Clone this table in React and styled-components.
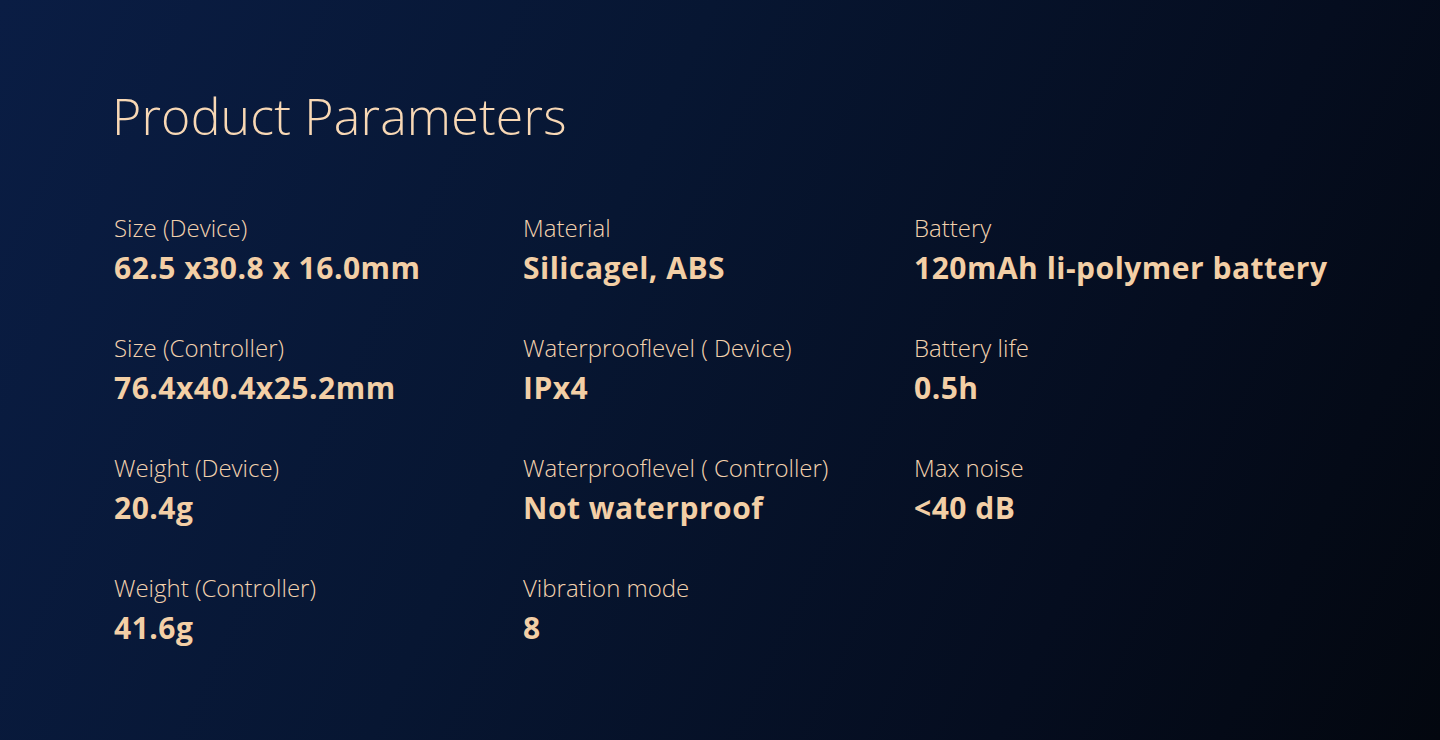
import React from "react";
import styled, { createGlobalStyle } from "styled-components";

const GlobalStyle = createGlobalStyle`
  html, body {
    margin: 0;
    padding: 0;
  }
  body {
    font-family: "Open Sans", "Noto Sans", "Liberation Sans", sans-serif;
  }
  * {
    box-sizing: border-box;
  }
`;

const params = [
  { label: "Size (Device)", value: "62.5 x30.8 x 16.0mm" },
  { label: "Material", value: "Silicagel, ABS" },
  { label: "Battery", value: "120mAh li-polymer battery" },
  { label: "Size (Controller)", value: "76.4x40.4x25.2mm" },
  { label: "Waterprooflevel ( Device)", value: "IPx4" },
  { label: "Battery life", value: "0.5h" },
  { label: "Weight (Device)", value: "20.4g" },
  { label: "Waterprooflevel ( Controller)", value: "Not waterproof" },
  { label: "Max noise", value: "<40 dB" },
  { label: "Weight (Controller)", value: "41.6g" },
  { label: "Vibration mode", value: "8" },
];

export default function App() {
  return (
    <>
      <GlobalStyle />
      <Section>
        <Title>Product Parameters</Title>
        <Grid>
          {params.map(({ label, value }) => (
            <Item key={label}>
              <Label>{label}</Label>
              <Value>{value}</Value>
            </Item>
          ))}
        </Grid>
      </Section>
    </>
  );
}

const Section = styled.section`
  width: 1440px;
  height: 740px;
  padding: 84px 0 0 112px;
  background: linear-gradient(115deg, #0a1d44 0%, #071632 40%, #050d1f 75%, #03070f 100%);
  color: #f6d6b2;
  overflow: hidden;
`;

const Title = styled.h1`
  margin: 0;
  font-weight: 300;
  font-size: 50px;
  line-height: 64px;
  letter-spacing: 0.2px;
  color: #f8d8b5;
`;

const Grid = styled.div`
  display: grid;
  grid-template-columns: 409px 391px 1fr;
  row-gap: 46px;
  margin-top: 66px;
  padding-left: 2px;
`;

const Item = styled.div`
  display: flex;
  flex-direction: column;
  gap: 6px;
`;

const Label = styled.span`
  font-weight: 300;
  font-size: 24px;
  line-height: 28px;
  color: #f3d2ae;
`;

const Value = styled.span`
  font-weight: 700;
  font-size: 30px;
  line-height: 40px;
  letter-spacing: 0.5px;
  color: #f3cfa6;
`;
